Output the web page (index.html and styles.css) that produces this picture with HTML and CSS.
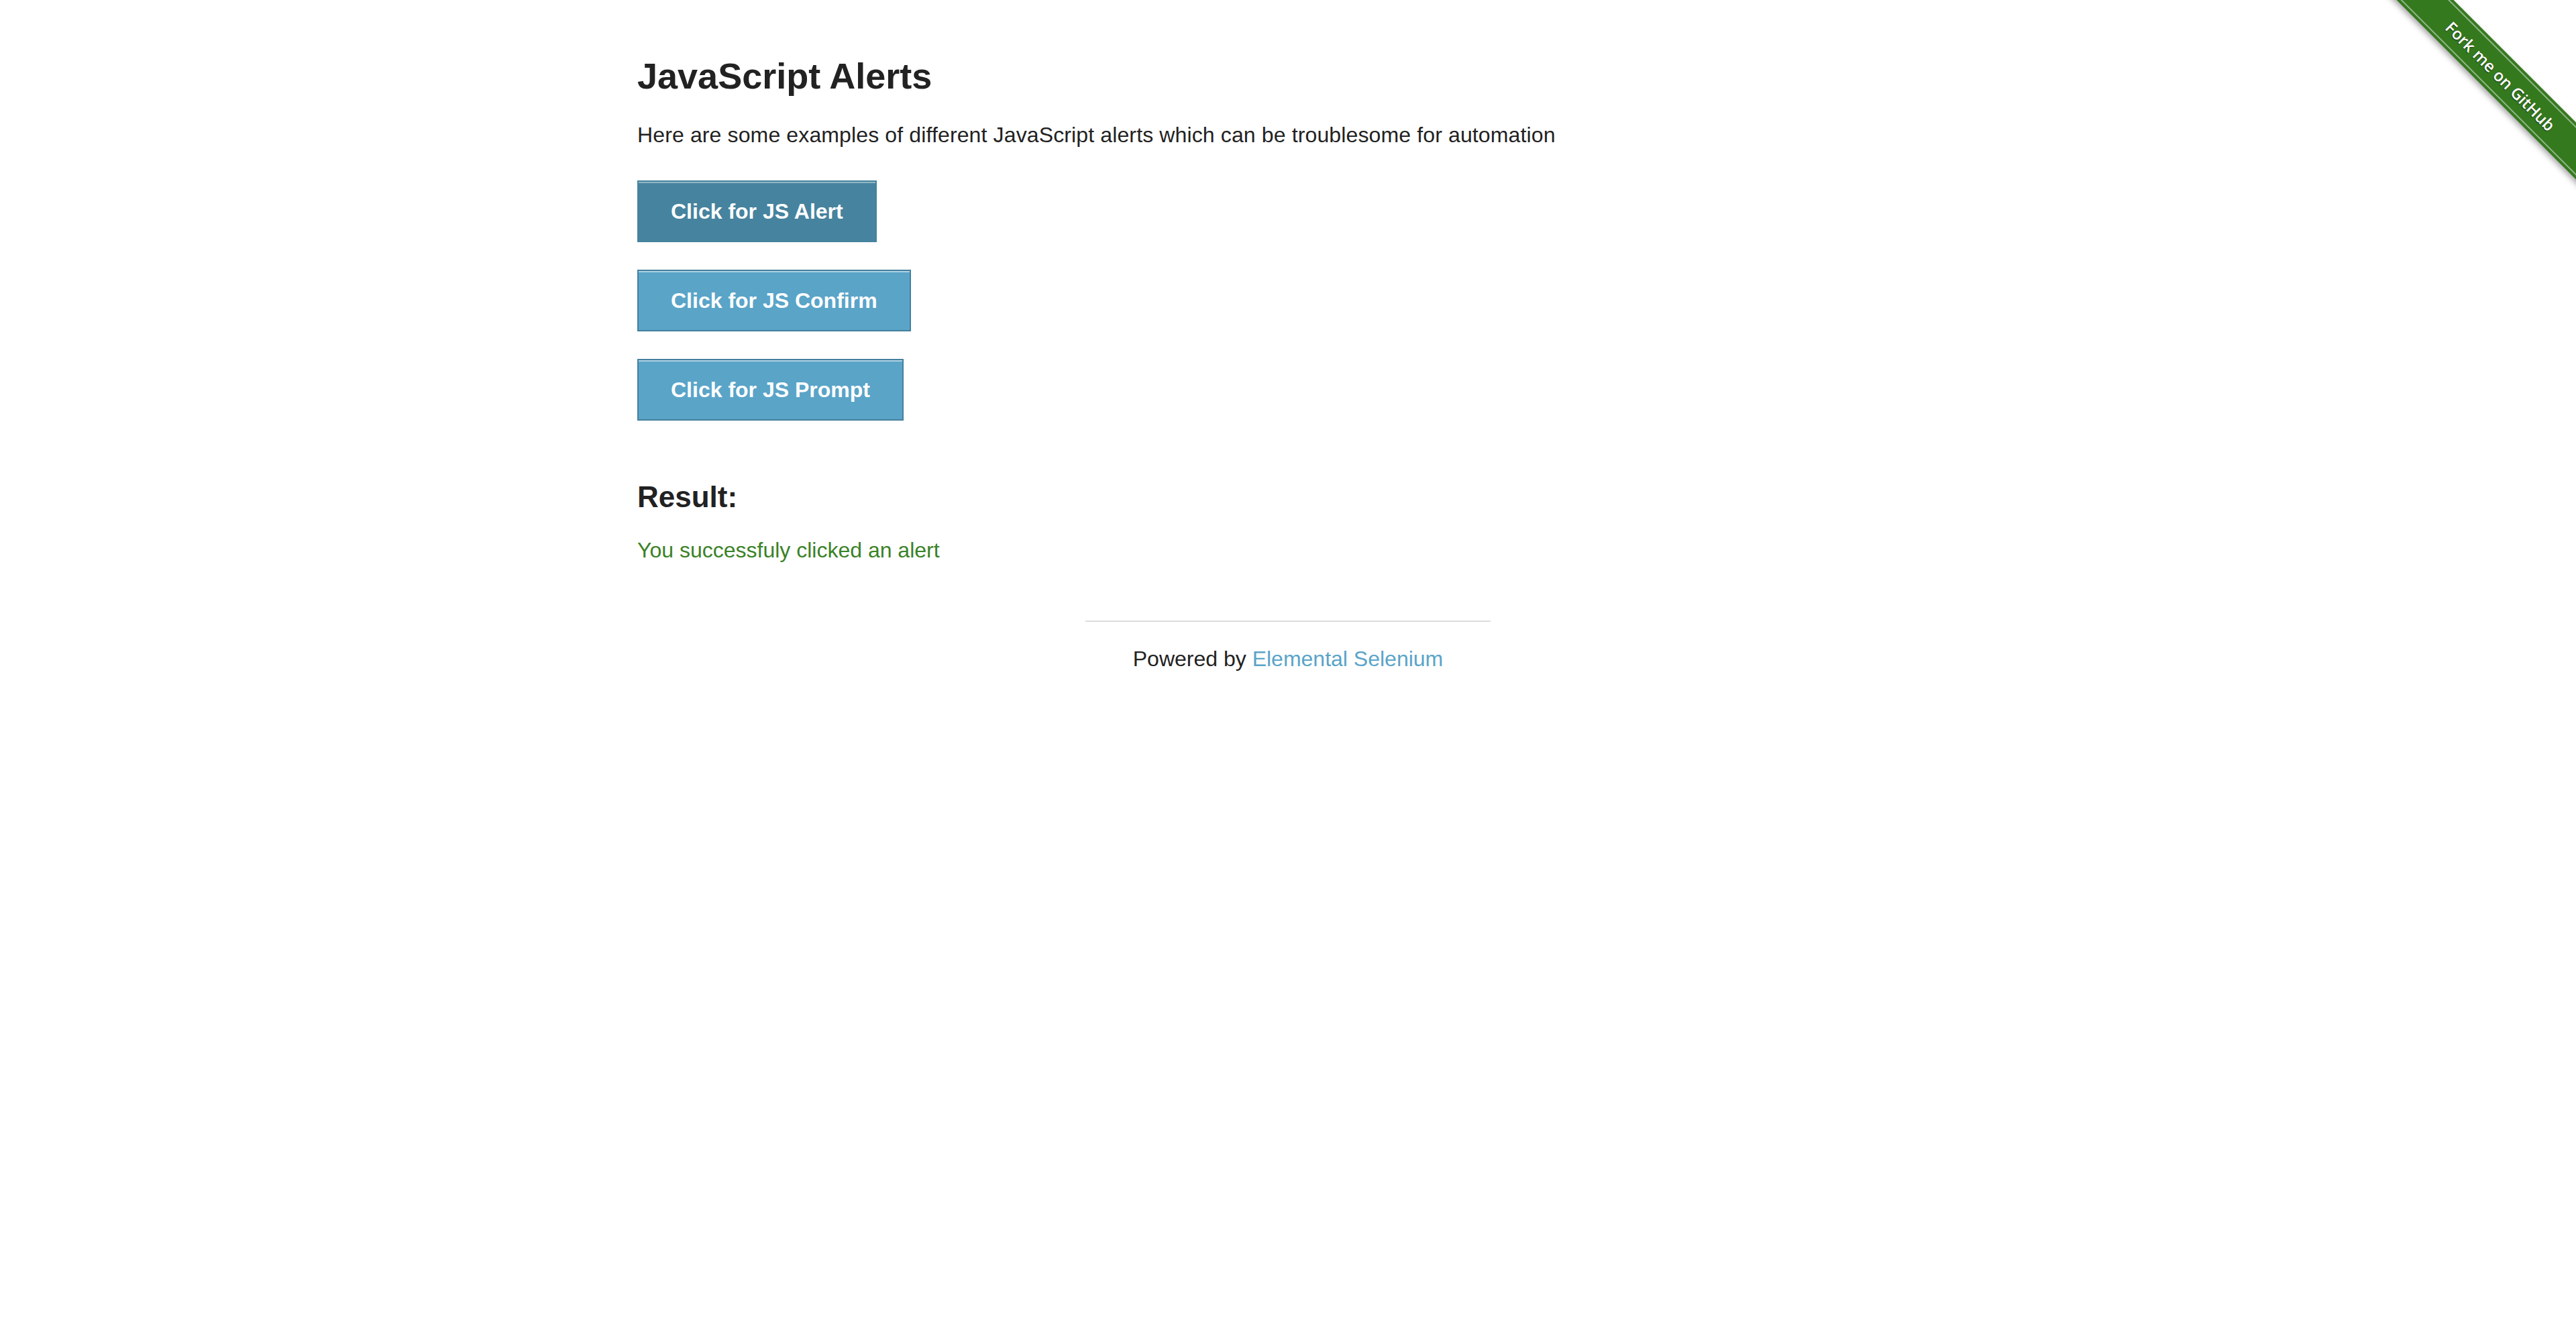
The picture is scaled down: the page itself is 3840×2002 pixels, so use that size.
FILE: index.html
```html
<!DOCTYPE html>
<html lang="en">
<head>
<meta charset="utf-8">
<title>The Internet</title>
<link rel="stylesheet" href="styles.css">
</head>
<body>
<a class="ribbon-wrap" href="#"><span class="ribbon"><span class="ribbon-text">Fork me on GitHub</span></span></a>
<div class="page">
  <div class="content">
    <h3 class="title">JavaScript Alerts</h3>
    <p class="intro">Here are some examples of different JavaScript alerts which can be troublesome for automation</p>
    <ul class="btn-list">
      <li><button class="btn btn-active">Click for JS Alert</button></li>
      <li><button class="btn">Click for JS Confirm</button></li>
      <li><button class="btn">Click for JS Prompt</button></li>
    </ul>
    <h4 class="result-title">Result:</h4>
    <p class="result">You successfuly clicked an alert</p>
  </div>
  <div class="footer">
    <div class="rule"></div>
    <div class="powered">Powered by <a class="link" href="#">Elemental Selenium</a></div>
  </div>
</div>
</body>
</html>
```
FILE: styles.css
```css
html, body {
  margin: 0;
  padding: 0;
  background: #ffffff;
}
body {
  font-family: "Liberation Sans", Arial, sans-serif;
  color: #222222;
  position: relative;
  min-height: 2002px;
}
.page {
  padding-top: 81px;
}
.content {
  width: 1940px;
  margin: 0 auto;
  display: flex;
  flex-direction: column;
  align-items: flex-start;
}
.title {
  margin: 0;
  font-size: 54px;
  line-height: 64px;
  font-weight: bold;
  color: #222222;
}
.intro {
  margin: 32px 0 0;
  font-size: 32px;
  line-height: 48px;
  letter-spacing: 0.13px;
}
.btn-list {
  list-style: none;
  margin: 44px 0 0;
  padding: 0;
  display: flex;
  flex-direction: column;
  gap: 41px;
}
.btn-list li {
  display: flex;
}
.btn {
  height: 92px;
  padding: 0 48px;
  border: 2px solid #44809d;
  background: #5aa4c8;
  color: #ffffff;
  font-family: "Liberation Sans", Arial, sans-serif;
  font-weight: bold;
  font-size: 32px;
  box-shadow: inset 0 2px 0 rgba(255, 255, 255, 0.5);
  cursor: pointer;
}
.btn-active {
  background: #46839e;
  border-color: #46839e;
  box-shadow: inset 0 2px 0 rgba(255, 255, 255, 0.42);
}
.result-title {
  margin: 87px 0 0;
  font-size: 44px;
  line-height: 54px;
  font-weight: bold;
  color: #222222;
}
.result {
  margin: 28px 0 0;
  font-size: 32px;
  line-height: 48px;
  color: #3a8227;
}
.footer {
  width: 604px;
  margin: 81px auto 0;
}
.rule {
  border-top: 2px solid #dddddd;
}
.powered {
  margin-top: 31px;
  font-size: 32px;
  line-height: 48px;
  text-align: center;
  color: #222222;
}
.link {
  color: #5aa4c8;
  text-decoration: none;
}
.ribbon-wrap {
  position: absolute;
  top: 0;
  right: 0;
  width: 300px;
  height: 300px;
  overflow: hidden;
  text-decoration: none;
  z-index: 5;
}
.ribbon {
  position: absolute;
  left: -22px;
  top: 83px;
  width: 420px;
  height: 60px;
  box-sizing: border-box;
  padding: 4px 0;
  background: #35791f;
  transform: rotate(45deg);
  box-shadow: 0 4px 8px rgba(0, 0, 0, 0.35);
  display: flex;
}
.ribbon-text {
  flex: 1;
  display: flex;
  align-items: center;
  justify-content: center;
  border-top: 2px solid rgba(255, 255, 255, 0.45);
  border-bottom: 2px solid rgba(255, 255, 255, 0.45);
  color: #ffffff;
  font-family: "Open Sans", "DejaVu Sans", sans-serif;
  font-weight: 600;
  font-size: 24px;
  text-shadow: 0 1px 2px rgba(0, 0, 0, 0.6);
  white-space: nowrap;
}
```
